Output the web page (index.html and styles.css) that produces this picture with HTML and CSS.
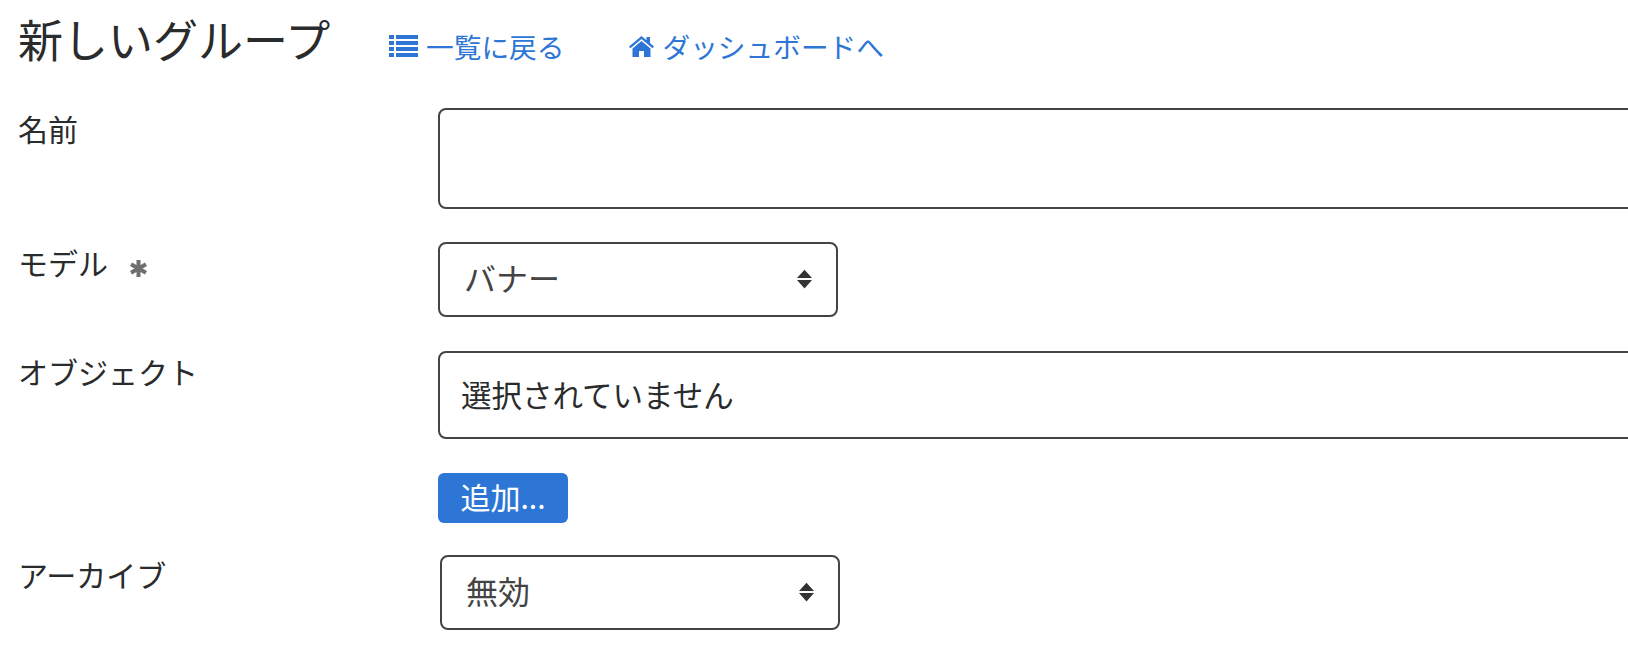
FILE: index.html
```html
<!DOCTYPE html>
<html lang="ja">
<head>
<meta charset="utf-8">
<title>新しいグループ</title>
<link rel="stylesheet" href="styles.css">
</head>
<body>
<header class="page-head">
  <h1 class="title">新しいグループ</h1>
  <nav class="links">
    <a class="link" href="#">
      <svg class="icon-list" viewBox="0 0 29 22" aria-hidden="true"><path d="M0 0h5v4H0zM7 0h22v4H7zM0 6h5v4H0zM7 6h22v4H7zM0 12h5v4H0zM7 12h22v4H7zM0 18h5v4H0zM7 18h22v4H7z"/></svg>
      <span>一覧に戻る</span>
    </a>
    <a class="link" href="#">
      <svg class="icon-home" viewBox="0 0 25 21" aria-hidden="true"><path d="M12.500 0 0 10.500l1.500 1.700L12.500 3l11 9.200 1.500-1.700-4-3.400V1h-3.500v3.200z"/><path d="M12.500 5 3.500 12.500V21H10v-6h5v6h6.500v-8.500z"/></svg>
      <span>ダッシュボードへ</span>
    </a>
  </nav>
</header>
<form class="form">
  <div class="row row-name">
    <label class="label">名前</label>
    <input class="text-input" type="text">
  </div>
  <div class="row row-model">
    <label class="label">モデル<svg class="req" viewBox="0 0 17 17" aria-hidden="true"><path d="M8.500 0v17M1 4.200l15 8.600M16 4.200 1 12.800"/></svg></label>
    <div class="select-wrap">
      <select class="select"><option>バナー</option></select>
      <svg class="arrows" viewBox="0 0 16 20" aria-hidden="true"><path d="M8 0l8 9H0zM0 11h16l-8 9z"/></svg>
    </div>
  </div>
  <div class="row row-object">
    <label class="label">オブジェクト</label>
    <div class="object-box">選択されていません</div>
  </div>
  <div class="row row-add">
    <span class="label"></span>
    <button class="add" type="button">追加...</button>
  </div>
  <div class="row row-archive">
    <label class="label">アーカイブ</label>
    <div class="select-wrap select-wrap-shift">
      <select class="select"><option>無効</option></select>
      <svg class="arrows" viewBox="0 0 16 20" aria-hidden="true"><path d="M8 0l8 9H0zM0 11h16l-8 9z"/></svg>
    </div>
  </div>
</form>
</body>
</html>
```
FILE: styles.css
```css
* { box-sizing: border-box; }
html, body { margin: 0; height: 100%; overflow: hidden; background: #fff; }
body {
  padding: 14px 0 0 18px;
  font-family: "Noto Sans CJK JP", "Liberation Sans", sans-serif;
  font-weight: 400;
  color: #292b2c;
  font-size: 30px;
  line-height: 1.5;
}
.page-head { display: flex; align-items: flex-start; height: 94px; }
.title { margin: 0; margin-top: -3px; font-size: 45px; font-weight: 400; line-height: 56px; width: 371px; height: 56px; }
.links { display: flex; gap: 65px; padding-top: 12px; }
.link { display: flex; align-items: center; gap: 8px; color: #2d76d6; text-decoration: none; font-size: 27.700px; line-height: 40px; font-weight: 400; }
.icon-list { width: 29px; height: 22px; fill: currentColor; }
.icon-home { width: 25px; height: 21px; fill: currentColor; }
.form { display: flex; flex-direction: column; }
.row { display: flex; align-items: flex-start; }
.label { width: 420px; flex: none; display: flex; align-items: flex-start; line-height: 40px; }
.row-name { height: 134px; }
.row-model { height: 109px; }
.row-object { height: 122px; }
.row-add { height: 82px; }
.row-archive .label { margin-top: -1px; }
.text-input, .object-box, .select {
  border: 2px solid #444;
  border-radius: 8px;
  background: #fff;
}
.text-input { width: 1400px; height: 101px; flex: none; }
.req { width: 17px; height: 17px; margin: 18px 0 0 22px; fill: none; stroke: #6f6f6f; stroke-width: 4; }
.select-wrap { position: relative; width: 400px; height: 75px; flex: none; }
.select-wrap-shift { margin-left: 2px; }
.select {
  appearance: none;
  -webkit-appearance: none;
  width: 100%;
  height: 100%;
  padding: 0 0 5px 24px;
  font: inherit;
  font-size: 32px;
  color: #444;
}
.arrows { position: absolute; right: 26px; top: 27px; width: 15px; height: 20px; fill: #333; }
.object-box { width: 1400px; height: 88px; flex: none; padding: 0 0 0 21px; display: flex; align-items: center; font-size: 30.500px; }
.add {
  width: 130px;
  height: 50px;
  flex: none;
  padding: 0 0 5px;
  border: 0;
  border-radius: 6px;
  background: #2d76d6;
  color: #fff;
  font: inherit;
  font-size: 30px;
  line-height: 42px;
}
```
